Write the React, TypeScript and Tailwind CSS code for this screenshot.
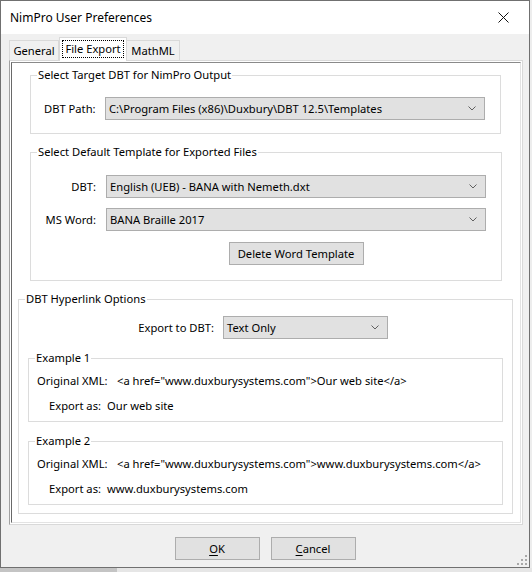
import React from "react";

function Chevron() {
  return (
    <svg width="8" height="5" viewBox="0 0 8 5" className="shrink-0">
      <polyline points="0.5,0.5 4,4 7.5,0.5" fill="none" stroke="#606060" strokeWidth="1" />
    </svg>
  );
}

function Dropdown({ value, className = "" }: { value: string; className?: string }) {
  return (
    <div className={`h-[23px] border border-[#adadad] bg-[#e1e1e1] flex items-center justify-between pl-[3px] pr-[8px] ${className}`}>
      <span className="leading-[16px] whitespace-nowrap">{value}</span>
      <Chevron />
    </div>
  );
}

function Group({ title, className = "", children }: { title: string; className?: string; children: React.ReactNode }) {
  return (
    <fieldset className={`border border-[#dcdcdc] ${className}`}>
      <legend className="ml-[6px] px-[1px] leading-[16px] whitespace-nowrap">{title}</legend>
      {children}
    </fieldset>
  );
}

function ExampleBox({ title, xml, exported, className = "" }: { title: string; xml: string; exported: string; className?: string }) {
  return (
    <Group title={title} className={`ml-[9px] w-[475px] ${className}`}>
      <div className="flex flex-col gap-[9px] pt-[7px] pb-[7px]">
        <div className="flex leading-[16px] pl-[8px] whitespace-nowrap">
          <span className="w-[80px]">Original XML:</span>
          <span>{xml}</span>
        </div>
        <div className="flex leading-[16px] pl-[20px] whitespace-nowrap">
          <span className="w-[58px]">Export as:</span>
          <span>{exported}</span>
        </div>
      </div>
    </Group>
  );
}

export default function App() {
  return (
    <div className="w-[532px] h-[572px] flex flex-col bg-[#e8e8e8] text-[11.2px] text-black font-['Noto_Sans','Open_Sans',sans-serif]">
      <div className="flex">
        <div className="relative w-[530px] h-[568px] border border-[#707070] bg-[#f0f0f0] flex flex-col">
          {/* title bar */}
          <div className="h-[33px] bg-white flex items-center justify-between pl-[9px] pr-[20px]">
            <span className="text-[12px] leading-[16px]">NimPro User Preferences</span>
            <svg width="11" height="11" viewBox="0 0 11 11">
              <path d="M0.5 0.5 L10.5 10.5 M10.5 0.5 L0.5 10.5" stroke="#111" strokeWidth="1" />
            </svg>
          </div>

          {/* tabs */}
          <div className="h-[26px] flex items-end pl-[8px]">
            <div className="w-[50px] h-[20px] border border-b-0 border-[#d9d9d9] bg-[#f0f0f0] flex items-center justify-center leading-[16px]">
              General
            </div>
            <div className="relative z-10 -mb-px w-[68px] h-[24px] border border-b-0 border-[#d9d9d9] bg-white p-[2px] pb-[3px]">
              <div className="h-full border border-dotted border-black flex items-center justify-center leading-[16px]">
                File Export
              </div>
            </div>
            <div className="w-[53px] h-[20px] border border-b-0 border-l-0 border-[#d9d9d9] bg-[#f0f0f0] flex items-center justify-center leading-[16px]">
              MathML
            </div>
          </div>

          {/* tab page */}
          <div className="ml-[8px] w-[514px] h-[465px] border border-[#d9d9d9] border-l-[#a0a0a0] bg-white p-[1px] flex">
            <div className="flex-1 border border-[#e3e3e3] border-l-[#696969] border-t-[#8a8a8a] flex flex-col">
              <Group title="Select Target DBT for NimPro Output" className="ml-[18px] mt-[4px] w-[471px]">
                <div className="flex items-center pl-[13px] pt-[14px] pb-[13px]">
                  <span className="w-[61px] leading-[16px]">DBT Path:</span>
                  <Dropdown value="C:\Program Files (x86)\Duxbury\DBT 12.5\Templates" className="w-[380px]" />
                </div>
              </Group>

              <Group title="Select Default Template for Exported Files" className="ml-[18px] mt-[10px] w-[472px]">
                <div className="flex flex-col pt-[15px] pb-[15px]">
                  <div className="flex items-center">
                    <span className="w-[65px] text-right leading-[16px]">DBT:</span>
                    <Dropdown value="English (UEB) - BANA with Nemeth.dxt" className="ml-[10px] w-[380px]" />
                  </div>
                  <div className="flex items-center mt-[10px]">
                    <span className="w-[65px] text-right leading-[16px]">MS Word:</span>
                    <Dropdown value="BANA Braille 2017" className="ml-[10px] w-[380px]" />
                  </div>
                  <div className="ml-[75px] w-[380px] flex justify-center mt-[11px]">
                    <button className="w-[135px] h-[23px] border border-[#adadad] bg-[#e1e1e1] leading-[16px]">
                      Delete Word Template
                    </button>
                  </div>
                </div>
              </Group>

              <Group title="DBT Hyperlink Options" className="ml-[6px] mt-[10px] w-[495px]">
                <div className="flex flex-col pt-[9px] pb-[8px]">
                  <div className="flex items-center">
                    <span className="w-[195px] text-right leading-[16px]">Export to DBT:</span>
                    <Dropdown value="Text Only" className="ml-[9px] w-[165px]" />
                  </div>
                  <ExampleBox
                    title="Example 1"
                    className="mt-[11px]"
                    xml={'<a href="www.duxburysystems.com">Our web site</a>'}
                    exported="Our web site"
                  />
                  <ExampleBox
                    title="Example 2"
                    className="mt-[11px]"
                    xml={'<a href="www.duxburysystems.com">www.duxburysystems.com</a>'}
                    exported="www.duxburysystems.com"
                  />
                </div>
              </Group>
            </div>
          </div>

          {/* buttons */}
          <div className="flex justify-center gap-[11px] mt-[12px]">
            <button className="w-[85px] h-[23px] border border-[#adadad] bg-[#e1e1e1] leading-[16px]">
              <span className="underline underline-offset-2">O</span>K
            </button>
            <button className="w-[85px] h-[23px] border border-[#adadad] bg-[#e1e1e1] leading-[16px]">
              <span className="underline underline-offset-2">C</span>ancel
            </button>
          </div>

          {/* size grip */}
          <svg width="10" height="10" viewBox="0 0 10 10" className="absolute right-[2px] bottom-[2px]">
            <g fill="#a8a8a8">
              <rect x="8" y="0" width="2" height="2" />
              <rect x="4" y="4" width="2" height="2" />
              <rect x="8" y="4" width="2" height="2" />
              <rect x="0" y="8" width="2" height="2" />
              <rect x="4" y="8" width="2" height="2" />
              <rect x="8" y="8" width="2" height="2" />
            </g>
          </svg>
        </div>
        <div className="flex-1 bg-[#ededed]" />
      </div>
      <div className="flex flex-1">
        <div className="w-[117px] bg-[#c4c4c4]" />
        <div className="flex-1 bg-[#e6e6e6]" />
      </div>
    </div>
  );
}
